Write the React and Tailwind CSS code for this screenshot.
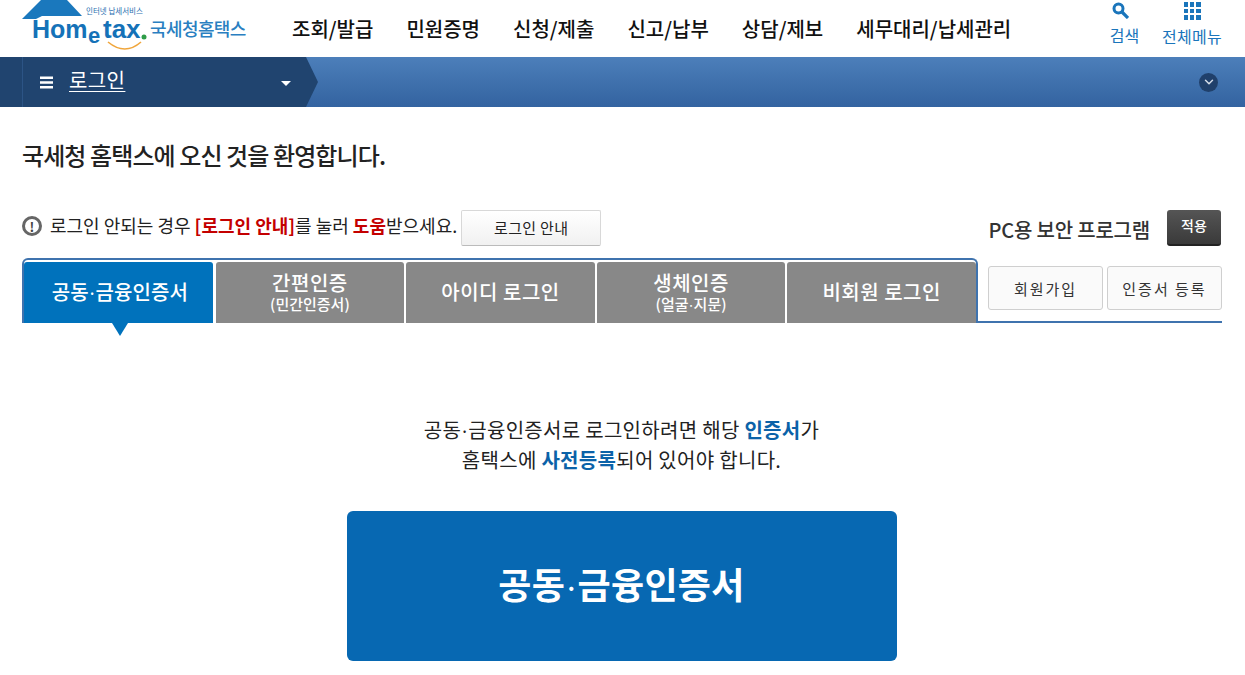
import React from 'react';
import { ChevronDown } from 'lucide-react';

const FONT = "font-['Noto_Sans_CJK_KR','Liberation_Sans',sans-serif]";

const navItems = ['조회/발급', '민원증명', '신청/제출', '신고/납부', '상담/제보', '세무대리/납세관리'];

const Logo = () => (
    <svg width="228" height="57" viewBox="0 0 228 57" className="shrink-0">
        <path d="M2 19 L21 0 L47 0 L62 16 L22 16 L16 19 Z" fill="#1a78bd" />
        <text x="66" y="14" fontSize="7.5" fill="#2a6fb0" fontFamily="Noto Sans CJK KR">인터넷 납세서비스</text>
        <text x="12" y="38" fontSize="25" fontWeight="700" fill="#1572b8" fontFamily="Liberation Sans">Hom</text>
        <text x="68" y="43" fontSize="22" fontWeight="700" fill="#1572b8" fontFamily="Liberation Sans">e</text>
        <text x="83" y="38" fontSize="26" fontWeight="700" fill="#1572b8" fontFamily="Liberation Sans">tax</text>
        <circle cx="124" cy="37" r="2.5" fill="#2e9c47" />
        <path d="M88 42 Q105 56 121 42" fill="none" stroke="#f0a63c" strokeWidth="1.6" />
        <text x="130" y="36" fontSize="18" fontWeight="500" fill="#2a7fc1" fontFamily="Noto Sans CJK KR" letterSpacing="-0.6">국세청홈택스</text>
    </svg>
);

const SearchIcon = () => (
    <svg width="17" height="17" viewBox="0 0 17 17" className="text-[#1a75bb]">
        <circle cx="6.5" cy="6.5" r="4.5" fill="none" stroke="currentColor" strokeWidth="3" />
        <path d="M10 10 L16 16" stroke="currentColor" strokeWidth="3.2" />
    </svg>
);

const GridIcon = () => (
    <div className="grid grid-cols-3 gap-[2px] w-[17px]">
        {[0, 1, 2, 3, 4, 5, 6, 7, 8].map((i) => (
            <span key={i} className="w-[4.5px] h-[4.5px] bg-[#1a75bb]" />
        ))}
    </div>
);

// the reference's middle dot is much narrower than the font's
const Dot = () => <span className="text-[0.55em] font-black leading-none align-[0.15em]">·</span>;

const tabs = [
    { title: <>공동<Dot />금융인증서</>, active: true },
    { title: '간편인증', sub: '(민간인증서)' },
    { title: '아이디 로그인' },
    { title: '생체인증', sub: <>(얼굴<Dot />지문)</> },
    { title: '비회원 로그인' },
];

const App = () => {
    return (
        <div className={`${FONT} w-[1245px] h-[675px] overflow-hidden bg-white text-[#222]`}>
            {/* Header */}
            <header className="h-[57px] flex items-center pl-[20px]">
                <Logo />
                <nav className="flex gap-[33px] ml-[44px] text-[20px] font-medium text-[#111]">
                    {navItems.map((item) => (
                        <a key={item} className="leading-[57px] whitespace-nowrap">{item}</a>
                    ))}
                </nav>
                <div className="ml-auto flex items-start text-[16px] text-[#1a75bb] pr-[23px] h-full">
                    <div className="flex flex-col items-center w-[29px] mr-[23px]">
                        <div className="mt-[2px] mb-[5px] -ml-[9px]"><SearchIcon /></div>
                        <span className="leading-[22px] whitespace-nowrap">검색</span>
                    </div>
                    <div className="flex flex-col items-center w-[60px]">
                        <div className="mt-[2px] mb-[5px]"><GridIcon /></div>
                        <span className="leading-[22px] whitespace-nowrap tracking-[0.3px]">전체메뉴</span>
                    </div>
                </div>
            </header>

            {/* Login bar */}
            <div className="h-[50px] flex items-center bg-gradient-to-b from-[#4c7fba] to-[#3363a0]">
                <div className="relative h-full w-[306px] bg-[#20446f] flex items-center pl-[40px] text-white">
                    <span className="absolute left-[22px] top-0 h-full w-px bg-[#2c5485]" />
                    <svg width="13" height="13" viewBox="0 0 13 13">
                        <path d="M0 0.5 H13 V3 H0 Z M0 5.2 H13 V7.7 H0 Z M0 10 H13 V12.5 H0 Z" fill="#fff" />
                    </svg>
                    <span className="ml-[16px] -mt-[5px] text-[20px] tracking-[0.4px] underline underline-offset-[3px] decoration-1 leading-none">로그인</span>
                    <svg width="10" height="5" viewBox="0 0 10 5" className="ml-auto mr-[15px] mt-[2px]">
                        <path d="M0 0 H10 L5 5 Z" fill="#fff" />
                    </svg>
                    <svg width="13" height="50" viewBox="0 0 13 50" className="absolute left-full top-0">
                        <path d="M0 0 L12 25 L0 50 Z" fill="#20446f" />
                    </svg>
                </div>
                <div className="ml-auto mr-[27px] w-[19px] h-[19px] rounded-full bg-[#20406b] flex items-center justify-center">
                    <ChevronDown size={14} strokeWidth={2.5} className="text-[#d5dde8]" />
                </div>
            </div>

            <main className="pl-[22px] pr-[24px]">
                <h1 className="mt-[31px] text-[24px] leading-[33px] font-medium text-[#222] tracking-[-0.9px]">
                    국세청 홈택스에 오신 것을 환영합니다.
                </h1>

                {/* Notice row */}
                <div className="mt-[39px] h-[36px] flex items-center">
                    <span className="w-[20px] h-[20px] -mt-[4px] rounded-full border-[3px] border-[#666] flex items-center justify-center text-[13px] font-bold text-[#444] leading-none">!</span>
                    <p className="ml-[8px] text-[18px] leading-none text-[#222] whitespace-nowrap -mt-[6px]">
                        로그인 안되는 경우 <b className="text-[#c40000]">[로그인 안내]</b>를 눌러 <b className="text-[#c40000]">도움</b>받으세요.
                    </p>
                    <button className="ml-[4px] w-[140px] h-[36px] rounded-[2px] border border-[#d8d8d8] border-b-[#bbb] bg-gradient-to-b from-white to-[#f1f1f1] text-[15px] tracking-[0.3px] text-[#222]">
                        로그인 안내
                    </button>
                    <span className="ml-auto mt-[3px] text-[20px] font-medium text-[#333] tracking-[-0.2px]">PC용 보안 프로그램</span>
                    <button className="ml-[17px] w-[54px] h-[36px] pb-[4px] rounded-[3px] bg-gradient-to-b from-[#555] to-[#3a3a3a] border-b-2 border-[#222] text-[14px] font-medium text-white">
                        적용
                    </button>
                </div>

                {/* Tabs */}
                <div className="mt-[12px] flex">
                    <div className="relative w-[956px] h-[65px] shrink-0 border-x-2 border-t-2 border-[#3f73ae] rounded-t-[6px] pt-[2px] flex gap-[2px]">
                        {tabs.map((tab, i) => (
                            <div
                                key={i}
                                className={`relative flex-1 rounded-t-[3px] flex flex-col items-center justify-center text-white font-medium ${tab.sub ? '' : 'pb-[2px]'} ${tab.active ? 'bg-[#0072bc] mr-px' : 'bg-[#888888]'}`}
                            >
                                <span className={`leading-[22px] text-[20px] whitespace-nowrap ${tab.active ? 'tracking-[0.1px] ml-[3px]' : 'tracking-[0.5px]'}`}>{tab.title}</span>
                                {tab.sub && <span className="text-[15px] leading-[20px]">{tab.sub}</span>}
                                {tab.active && (
                                    <span className="absolute left-[88px] top-full w-0 h-0 border-x-[8px] border-x-transparent border-t-[13px] border-t-[#0072bc]" />
                                )}
                            </div>
                        ))}
                    </div>
                    <div className="w-[244px] h-[65px] shrink-0 border-b-2 border-[#3f73ae] pl-[10px] pt-[8px] flex gap-[4px]">
                        <button className="w-[115px] h-[44px] pt-[2px] rounded-[3px] border border-[#cfcfcf] bg-[#fafafa] text-[15px] text-[#333] tracking-[2px]">회원가입</button>
                        <button className="w-[115px] h-[44px] pt-[2px] rounded-[3px] border border-[#cfcfcf] bg-[#fafafa] text-[15px] text-[#333] tracking-[2px]">인증서 등록</button>
                    </div>
                </div>

                {/* Description */}
                <div className="mt-[92px] text-center text-[20px] leading-[30px] text-[#222] tracking-[0.3px]">
                    <p>공동<Dot />금융인증서로 로그인하려면 해당 <b className="text-[#0b62a8]">인증서</b>가</p>
                    <p>홈택스에 <b className="text-[#0b62a8]">사전등록</b>되어 있어야 합니다.</p>
                </div>

                <div className="mt-[36px] flex justify-center">
                    <button className="w-[550px] h-[150px] pb-[6px] rounded-[6px] bg-[#0768b2] text-white text-[36px] font-bold tracking-[0.3px]">
                        공동<Dot />금융인증서
                    </button>
                </div>
            </main>
        </div>
    );
};

export default App;
